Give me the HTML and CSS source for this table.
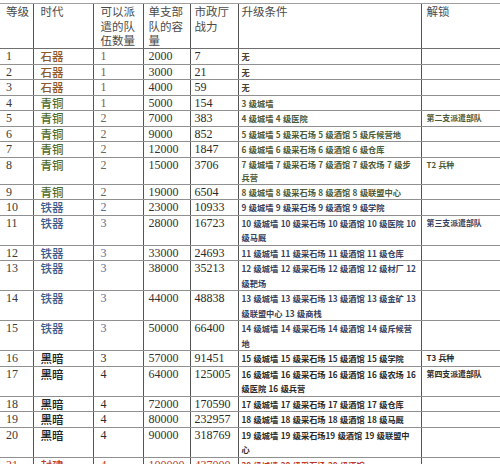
FILE: index.html
```html
<!DOCTYPE html>
<html lang="zh">
<head>
<meta charset="utf-8">
<link rel="stylesheet" href="styles.css">
</head>
<body>
<table class="grid">
<colgroup>
<col class="c1"><col class="c2"><col class="c3"><col class="c4"><col class="c5"><col class="c6"><col class="c7">
</colgroup>
<thead>
<tr>
<th class="p1">等级</th><th class="p2">时代</th><th class="p3">可以派<br>遣的队<br>伍数量</th><th class="p4">单支部<br>队的容<br>量</th><th class="p5">市政厅<br>战力</th><th class="p6">升级条件</th><th class="p7">解锁</th>
</tr>
</thead>
<tbody>
<tr class="stone"><td class="p1">1</td><td class="p2 era">石器</td><td class="p3 n3">1</td><td class="p4 n4">2000</td><td class="p5">7</td><td class="p6 cond">无</td><td class="p7"></td></tr>
<tr class="stone"><td class="p1">2</td><td class="p2 era">石器</td><td class="p3 n3">1</td><td class="p4 n4">3000</td><td class="p5">21</td><td class="p6 cond">无</td><td class="p7"></td></tr>
<tr class="stone"><td class="p1">3</td><td class="p2 era">石器</td><td class="p3 n3">1</td><td class="p4 n4">4000</td><td class="p5">59</td><td class="p6 cond">无</td><td class="p7"></td></tr>
<tr class="bronze"><td class="p1">4</td><td class="p2 era">青铜</td><td class="p3 n3 brown">1</td><td class="p4 n4">5000</td><td class="p5">154</td><td class="p6 cond">3 级城墙</td><td class="p7"></td></tr>
<tr class="bronze"><td class="p1">5</td><td class="p2 era">青铜</td><td class="p3 n3">2</td><td class="p4 n4">7000</td><td class="p5">383</td><td class="p6 cond">4 级城墙 4 级医院</td><td class="p7 unlock">第二支派遣部队</td></tr>
<tr class="bronze"><td class="p1">6</td><td class="p2 era">青铜</td><td class="p3 n3">2</td><td class="p4">9000</td><td class="p5">852</td><td class="p6 cond">5 级城墙 5 级采石场 5 级酒馆 5 级斥候营地</td><td class="p7"></td></tr>
<tr class="bronze"><td class="p1">7</td><td class="p2 era">青铜</td><td class="p3 n3">2</td><td class="p4">12000</td><td class="p5">1847</td><td class="p6 cond">6 级城墙 6 级采石场 6 级酒馆 6 级仓库</td><td class="p7"></td></tr>
<tr class="bronze tall"><td class="p1">8</td><td class="p2 era">青铜</td><td class="p3 n3">2</td><td class="p4">15000</td><td class="p5">3706</td><td class="p6 cond">7 级城墙 7 级采石场 7 级酒馆 7 级农场 7 级步<br>兵营</td><td class="p7 unlock">T2 兵种</td></tr>
<tr class="bronze"><td class="p1">9</td><td class="p2 era">青铜</td><td class="p3 n3">2</td><td class="p4">19000</td><td class="p5">6504</td><td class="p6 cond">8 级城墙 8 级采石场 8 级酒馆 8 级联盟中心</td><td class="p7"></td></tr>
<tr class="iron"><td class="p1">10</td><td class="p2 era">铁器</td><td class="p3 n3">2</td><td class="p4">23000</td><td class="p5">10933</td><td class="p6 cond">9 级城墙 9 级采石场 9 级酒馆 9 级学院</td><td class="p7"></td></tr>
<tr class="iron"><td class="p1">11</td><td class="p2 era">铁器</td><td class="p3 n3">3</td><td class="p4">28000</td><td class="p5">16723</td><td class="p6 cond">10 级城墙 10 级采石场 10 级酒馆 10 级医院 10<br>级马厩</td><td class="p7 unlock">第三支派遣部队</td></tr>
<tr class="iron"><td class="p1">12</td><td class="p2 era">铁器</td><td class="p3 n3">3</td><td class="p4">33000</td><td class="p5">24693</td><td class="p6 cond">11 级城墙 11 级采石场 11 级酒馆 11 级仓库</td><td class="p7"></td></tr>
<tr class="iron"><td class="p1">13</td><td class="p2 era">铁器</td><td class="p3 n3">3</td><td class="p4">38000</td><td class="p5">35213</td><td class="p6 cond">12 级城墙 12 级采石场 12 级酒馆 12 级材厂 12<br>级靶场</td><td class="p7"></td></tr>
<tr class="iron"><td class="p1">14</td><td class="p2 era">铁器</td><td class="p3 n3">3</td><td class="p4">44000</td><td class="p5">48838</td><td class="p6 cond">13 级城墙 13 级采石场 13 级酒馆 13 级金矿 13<br>级联盟中心 13 级商栈</td><td class="p7"></td></tr>
<tr class="iron"><td class="p1">15</td><td class="p2 era">铁器</td><td class="p3 n3">3</td><td class="p4">50000</td><td class="p5">66400</td><td class="p6 cond">14 级城墙 14 级采石场 14 级酒馆 14 级斥候营<br>地</td><td class="p7"></td></tr>
<tr class="dark"><td class="p1">16</td><td class="p2 era">黑暗</td><td class="p3 n3">3</td><td class="p4">57000</td><td class="p5">91451</td><td class="p6 cond">15 级城墙 15 级采石场 15 级酒馆 15 级学院</td><td class="p7 unlock">T3 兵种</td></tr>
<tr class="dark"><td class="p1">17</td><td class="p2 era">黑暗</td><td class="p3 n3">4</td><td class="p4">64000</td><td class="p5">125005</td><td class="p6 cond">16 级城墙 16 级采石场 16 级酒馆 16 级农场 16<br>级医院 16 级兵营</td><td class="p7 unlock">第四支派遣部队</td></tr>
<tr class="dark"><td class="p1">18</td><td class="p2 era">黑暗</td><td class="p3 n3">4</td><td class="p4">72000</td><td class="p5">170590</td><td class="p6 cond">17 级城墙 17 级采石场 17 级酒馆 17 级仓库</td><td class="p7"></td></tr>
<tr class="dark"><td class="p1">19</td><td class="p2 era">黑暗</td><td class="p3 n3">4</td><td class="p4">80000</td><td class="p5">232957</td><td class="p6 cond">18 级城墙 18 级采石场 18 级酒馆 18 级马厩</td><td class="p7"></td></tr>
<tr class="dark"><td class="p1">20</td><td class="p2 era">黑暗</td><td class="p3 n3">4</td><td class="p4">90000</td><td class="p5">318769</td><td class="p6 cond">19 级城墙 19 级采石场19 级酒馆 19 级联盟中<br>心</td><td class="p7"></td></tr>
<tr class="red"><td class="p1">21</td><td class="p2 era">封建</td><td class="p3 n3">4</td><td class="p4">100000</td><td class="p5">437000</td><td class="p6 cond">20 级城墙 20 级采石场 20 级酒馆</td><td class="p7"></td></tr>
</tbody>
</table>
</body>
</html>
```

FILE: styles.css
```css
html, body {
  margin: 0;
  padding: 0;
  background: #ffffff;
  overflow: hidden;
}
body {
  padding-top: 3px;
  width: 500px;
  height: 464px;
}
.grid {
  border-collapse: collapse;
  table-layout: fixed;
  width: 540px;
  font-family: "Liberation Serif", "Noto Sans CJK SC", serif;
  font-size: 12px;
  color: #333;
}
.c1 { width: 33px; }
.c2 { width: 60px; }
.c3 { width: 50px; }
.c4 { width: 47px; }
.c5 { width: 48px; }
.c6 { width: 183px; }
.c7 { width: 119px; }

.grid th, .grid td {
  vertical-align: top;
  text-align: left;
  padding: 0;
  border-left: 1px solid #555555;
  border-top: 1px solid #909090;
  border-bottom: 1px solid #909090;
  line-height: 14.5px;
  white-space: nowrap;
  overflow: hidden;
}
.grid th.p1, .grid td.p1 { border-left: none; }
.grid th {
  font-family: "Noto Sans CJK SC", sans-serif;
  font-weight: 400;
  font-size: 11.5px;
  line-height: 14.7px;
  color: #4a4a4a;
  border-top-color: #a0a0a0;
  border-bottom-color: #707070;
}
.p1 { padding-left: 6px !important; }
.p2 { padding-left: 7px !important; }
.p3 { padding-left: 7px !important; }
.p4 { padding-left: 5px !important; }
.p5 { padding-left: 4px !important; }
.p6 { padding-left: 3px !important; padding-right: 2px !important; }
.p7 { padding-left: 5px !important; }

.grid td.p1 { color: #3a3a3a; }
.grid td.p5 { color: #2a2a2a; }
.grid td.p4 { color: #333; }

.era {
  font-family: "Noto Sans CJK SC", sans-serif;
  font-size: 11.5px;
  font-weight: 500;
}
.cond, .unlock {
  font-family: "Noto Sans CJK SC", sans-serif;
  font-size: 8.2px;
  font-weight: 700;
  word-spacing: 0.6px;
}
.grid .tall .cond { line-height: 13px; }
.unlock { font-size: 7.9px; }

/* stone age */
.stone .era { color: #8e5a2c; }
.stone .n3 { color: #8e5a2c; }
.stone .n4 { color: #7a5326; }
.stone .cond { color: #4a4030; }

/* bronze age */
.bronze .era { color: #4c6a2c; }
.bronze .n3 { color: #6a6a58; }
.bronze .n3.brown { color: #8e5a2c; }
.bronze .n4 { color: #4c6a2c; }
.bronze .cond, .bronze .unlock { color: #4a5a38; }

/* iron age */
.iron .era { color: #3e5c8c; }
.iron .n3 { color: #5a6e96; }
.iron .cond, .iron .unlock { color: #35415e; }

/* dark age */
.dark .era { color: #222; }
.dark .n3 { color: #2a2a2a; }
.dark .cond, .dark .unlock { color: #2a2a2a; }

/* next row, cut off */
.red td { color: #c0392b !important; }
.red .cond { color: #c0392b; }
```
